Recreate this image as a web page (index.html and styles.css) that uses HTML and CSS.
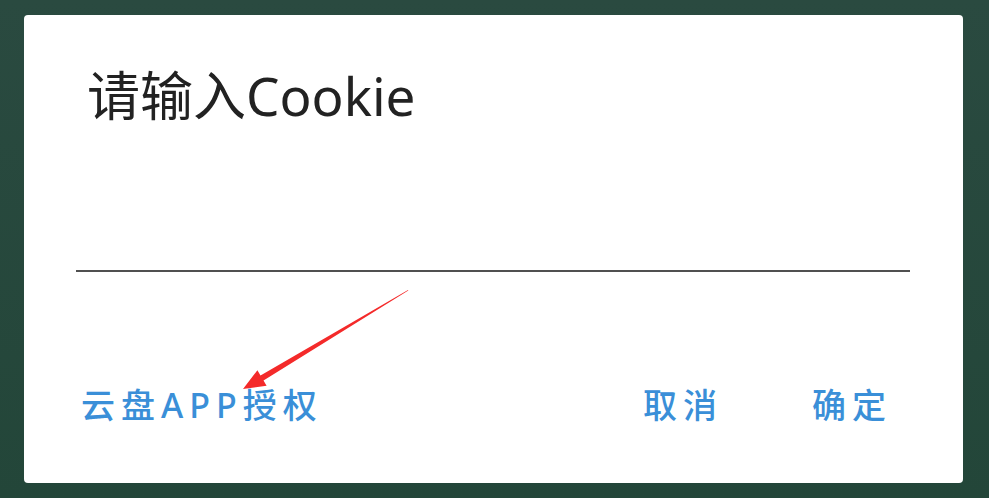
FILE: index.html
```html
<!DOCTYPE html>
<html lang="zh-CN">
<head>
<meta charset="utf-8">
<title>请输入Cookie</title>
<link rel="stylesheet" href="styles.css">
</head>
<body>
<div class="dialog">
  <h1 class="title">请输入Cookie</h1>
  <input class="field" type="text" aria-label="Cookie">
  <div class="actions">
    <button class="btn">云盘APP授权</button>
    <div class="right">
      <button class="btn">取消</button>
      <button class="btn">确定</button>
    </div>
  </div>
</div>
<svg class="arrow" width="989" height="498" viewBox="0 0 989 498">
  <polygon fill="#f42a2a" points="408,290 408.3,290.5 263.5,380.6 266.6,385.7 243,389 257.4,370.3 260.5,375.4"/>
</svg>
</body>
</html>
```
FILE: styles.css
```css
html, body {
  margin: 0;
  padding: 0;
}
body {
  width: 989px;
  height: 498px;
  overflow: hidden;
  background: linear-gradient(180deg, #2a4a40 0%, #234639 100%);
  font-family: "Noto Sans", "Noto Sans CJK SC", sans-serif;
  position: relative;
}
.dialog {
  margin: 15px 0 0 24px;
  width: 939px;
  height: 468px;
  background: #ffffff;
  border-radius: 4px;
  display: flex;
  flex-direction: column;
  box-sizing: border-box;
}
.title {
  margin: 55px 0 0 0;
  padding-left: 63px;
  font-size: 53px;
  line-height: 52px;
  font-weight: 400;
  color: #222222;
}
.field {
  display: block;
  margin: 98px 53px 0 52px;
  height: 52px;
  border: none;
  border-bottom: 2px solid #505050;
  outline: none;
  background: transparent;
  padding: 0;
  box-sizing: border-box;
}
.actions {
  margin-top: 117px;
  display: flex;
  justify-content: space-between;
  padding: 0 71px 0 57px;
}
.right {
  display: flex;
  gap: 89px;
}
.btn {
  border: none;
  background: none;
  padding: 0;
  font-family: "Noto Sans", "Noto Sans CJK SC", sans-serif;
  font-size: 34px;
  line-height: 33px;
  letter-spacing: 6px;
  font-weight: 500;
  color: #3a8fd8;
}
.arrow {
  position: absolute;
  left: 0;
  top: 0;
}
```
